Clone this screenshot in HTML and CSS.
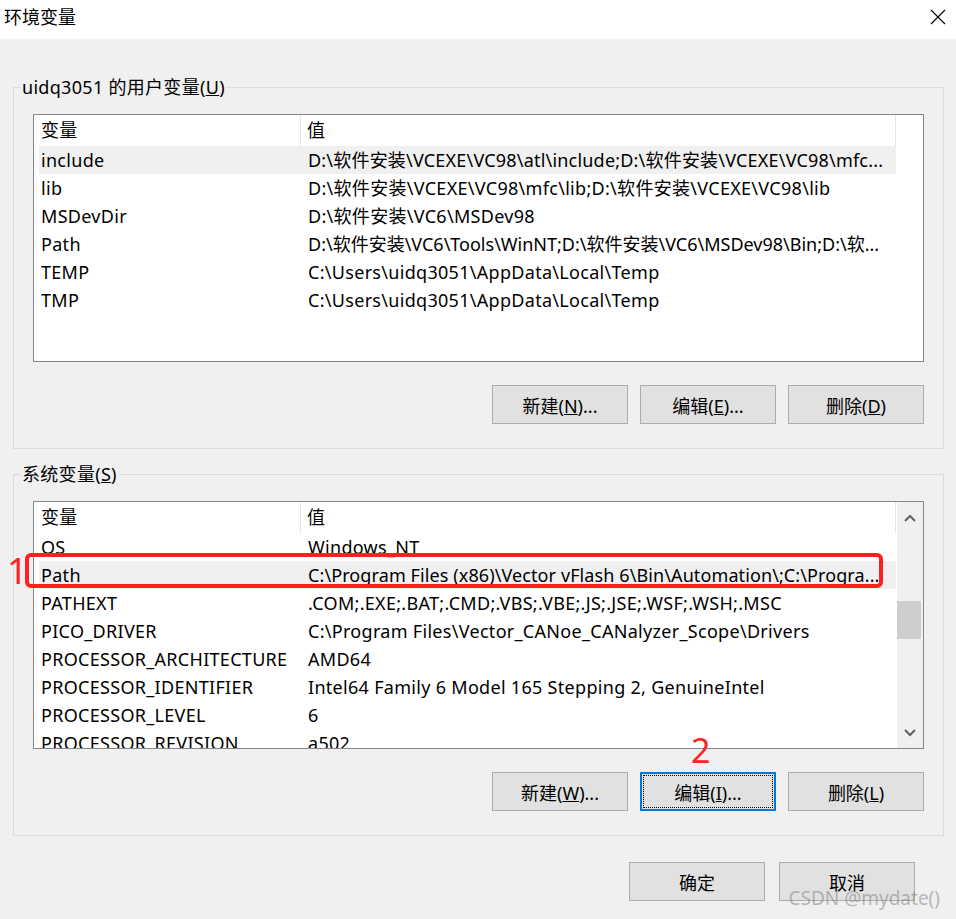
FILE: index.html
```html
<!DOCTYPE html>
<html lang="zh-CN">
<head>
    <meta charset="UTF-8">
    <title>环境变量</title>
    <link rel="stylesheet" href="styles.css">
</head>
<body>
    <div class="window">
        <div class="titlebar">
            <span class="title">环境变量</span>
            <svg class="close" width="16" height="16" viewBox="0 0 16 16">
                <path d="M1 1 L15 15 M15 1 L1 15" stroke="#000" stroke-width="1.1" fill="none"/>
            </svg>
        </div>

        <div class="main">
            <fieldset class="group">
                <legend>uidq3051 的用户变量(<u>U</u>)</legend>
                <div class="group-body">
                    <div class="list">
                        <div class="list-view">
                            <div class="list-head">
                                <div class="cell name">变量</div>
                                <div class="cell value">值</div>
                            </div>
                            <div class="row selected"><div class="cell name">include</div><div class="cell value snug">D:\软件安装\VCEXE\VC98\atl\include;D:\软件安装\VCEXE\VC98\mfc...</div></div>
                            <div class="row"><div class="cell name">lib</div><div class="cell value">D:\软件安装\VCEXE\VC98\mfc\lib;D:\软件安装\VCEXE\VC98\lib</div></div>
                            <div class="row"><div class="cell name">MSDevDir</div><div class="cell value">D:\软件安装\VC6\MSDev98</div></div>
                            <div class="row"><div class="cell name">Path</div><div class="cell value tight">D:\软件安装\VC6\Tools\WinNT;D:\软件安装\VC6\MSDev98\Bin;D:\软...</div></div>
                            <div class="row"><div class="cell name">TEMP</div><div class="cell value">C:\Users\uidq3051\AppData\Local\Temp</div></div>
                            <div class="row"><div class="cell name">TMP</div><div class="cell value">C:\Users\uidq3051\AppData\Local\Temp</div></div>
                        </div>
                    </div>
                    <div class="buttons">
                        <button class="btn">新建(<u>N</u>)...</button>
                        <button class="btn">编辑(<u>E</u>)...</button>
                        <button class="btn">删除(<u>D</u>)</button>
                    </div>
                </div>
            </fieldset>

            <fieldset class="group system">
                <legend>系统变量(<u>S</u>)</legend>
                <div class="group-body">
                    <div class="list">
                        <div class="list-view">
                            <div class="list-head">
                                <div class="cell name">变量</div>
                                <div class="cell value">值</div>
                            </div>
                            <div class="row"><div class="cell name">OS</div><div class="cell value">Windows_NT</div></div>
                            <div class="row selected"><div class="cell name">Path</div><div class="cell value narrow">C:\Program Files (x86)\Vector vFlash 6\Bin\Automation\;C:\Progra...</div></div>
                            <div class="row"><div class="cell name">PATHEXT</div><div class="cell value">.COM;.EXE;.BAT;.CMD;.VBS;.VBE;.JS;.JSE;.WSF;.WSH;.MSC</div></div>
                            <div class="row"><div class="cell name">PICO_DRIVER</div><div class="cell value">C:\Program Files\Vector_CANoe_CANalyzer_Scope\Drivers</div></div>
                            <div class="row"><div class="cell name">PROCESSOR_ARCHITECTURE</div><div class="cell value">AMD64</div></div>
                            <div class="row"><div class="cell name">PROCESSOR_IDENTIFIER</div><div class="cell value">Intel64 Family 6 Model 165 Stepping 2, GenuineIntel</div></div>
                            <div class="row"><div class="cell name">PROCESSOR_LEVEL</div><div class="cell value">6</div></div>
                            <div class="row"><div class="cell name">PROCESSOR_REVISION</div><div class="cell value">a502</div></div>
                        </div>
                        <div class="scrollbar">
                            <div class="arrow">
                                <svg width="12" height="8" viewBox="0 0 12 8"><path d="M1 7 L6 2 L11 7" stroke="#606060" stroke-width="2" fill="none"/></svg>
                            </div>
                            <div class="track"><div class="thumb"></div></div>
                            <div class="arrow">
                                <svg width="12" height="8" viewBox="0 0 12 8"><path d="M1 1 L6 6 L11 1" stroke="#606060" stroke-width="2" fill="none"/></svg>
                            </div>
                        </div>
                    </div>
                    <div class="buttons">
                        <button class="btn">新建(<u>W</u>)...</button>
                        <button class="btn focused">编辑(<u>I</u>)...</button>
                        <button class="btn">删除(<u>L</u>)</button>
                    </div>

                    <!-- annotations drawn on the screenshot -->
                    <div class="mark-box"></div>
                    <span class="mark-num one">1</span>
                    <span class="mark-num two">2</span>
                </div>
            </fieldset>

            <div class="dialog-buttons">
                <button class="btn">确定</button>
                <button class="btn">取消</button>
            </div>
        </div>

        <div class="watermark">CSDN @mydate()</div>
    </div>
</body>
</html>
```

FILE: styles.css
```css
body {
    margin: 0;
    background-color: #f0f0f0;
    font-family: "Noto Sans", "Noto Sans CJK SC", sans-serif;
    font-size: 18px;
    color: #000;
}

.window {
    position: relative;
    height: 919px;
    overflow: hidden;
}

.titlebar {
    height: 39px;
    background-color: #fff;
    display: flex;
    justify-content: space-between;
    align-items: flex-start;
    padding: 5px 10px 0 4px;
    box-sizing: border-box;
}

.title {
    line-height: 24px;
}

.close {
    margin-top: 4px;
}

.main {
    padding: 36px 12px 0 13px;
}

.group {
    margin: 0;
    padding: 0;
    border: 1px solid #dcdcdc;
    min-width: 0;
}

.group.system {
    margin-top: 13px;
}

.group legend {
    margin-left: 6px;
    padding: 0 2px;
    line-height: 24px;
    letter-spacing: 0.3px;
}

.group-body {
    position: relative;
    padding: 15px 19px 24px;
}

.list {
    height: 248px;
    box-sizing: border-box;
    border: 1px solid #828790;
    background-color: #fff;
    display: flex;
    overflow: hidden;
}

.list-view {
    padding-left: 5px;
    width: 857px;
}

.list-head,
.row {
    display: grid;
    grid-template-columns: 262px 595px;
}

.list-head {
    height: 31px;
    line-height: 31px;
}

.list-head .cell {
    border-right: 1px solid #e5e5e5;
}

.row {
    height: 28px;
    line-height: 28px;
}

.row.selected {
    background-color: #f0f0f0;
}

.cell {
    white-space: nowrap;
    overflow: hidden;
    letter-spacing: 0.3px;
}

/* long values already cut with "..." keep their ends inside the column */
.cell.snug { letter-spacing: 0.2px; }
.cell.narrow { letter-spacing: 0.1px; }
.cell.tight { letter-spacing: 0; }

.cell.name { padding-left: 2px; }
.list-head .cell.value { padding-left: 6px; }
.row .cell.value { padding-left: 7px; }

.scrollbar {
    margin-left: auto;
    width: 26px;
    background-color: #f0f0f0;
    display: flex;
    flex-direction: column;
}

.arrow {
    height: 31px;
    display: flex;
    align-items: center;
    justify-content: center;
}

.track {
    flex: 1;
}

.thumb {
    margin-top: 68px;
    width: 24px;
    height: 38px;
    background-color: #cdcdcd;
}

.buttons {
    display: flex;
    justify-content: flex-end;
    gap: 12px;
    margin-top: 23px;
}

.btn {
    width: 136px;
    height: 39px;
    padding: 0;
    background-color: #e1e1e1;
    border: 1px solid #adadad;
    font-family: inherit;
    font-size: 18px;
    color: #000;
}

.btn.focused {
    border: 2px solid #0078d7;
    outline: 1px dotted #000;
    outline-offset: -4px;
}

.dialog-buttons {
    display: flex;
    justify-content: flex-end;
    gap: 14px;
    margin-top: 26px;
    padding-right: 29px;
}

.mark-box {
    position: absolute;
    left: 11px;
    top: 67px;
    width: 858px;
    height: 35px;
    box-sizing: border-box;
    border: 4px solid #ff1f1f;
    border-radius: 6px;
}

.mark-num {
    position: absolute;
    color: #ff1f1f;
    line-height: 1;
}

.mark-num.one {
    left: -7px;
    top: 67px;
    font-size: 36px;
}

.mark-num.two {
    left: 677px;
    top: 247px;
    font-size: 34px;
}

.watermark {
    position: absolute;
    right: 16px;
    bottom: 9px;
    font-size: 19px;
    line-height: 24px;
    color: rgba(130, 130, 130, 0.55);
}
```
